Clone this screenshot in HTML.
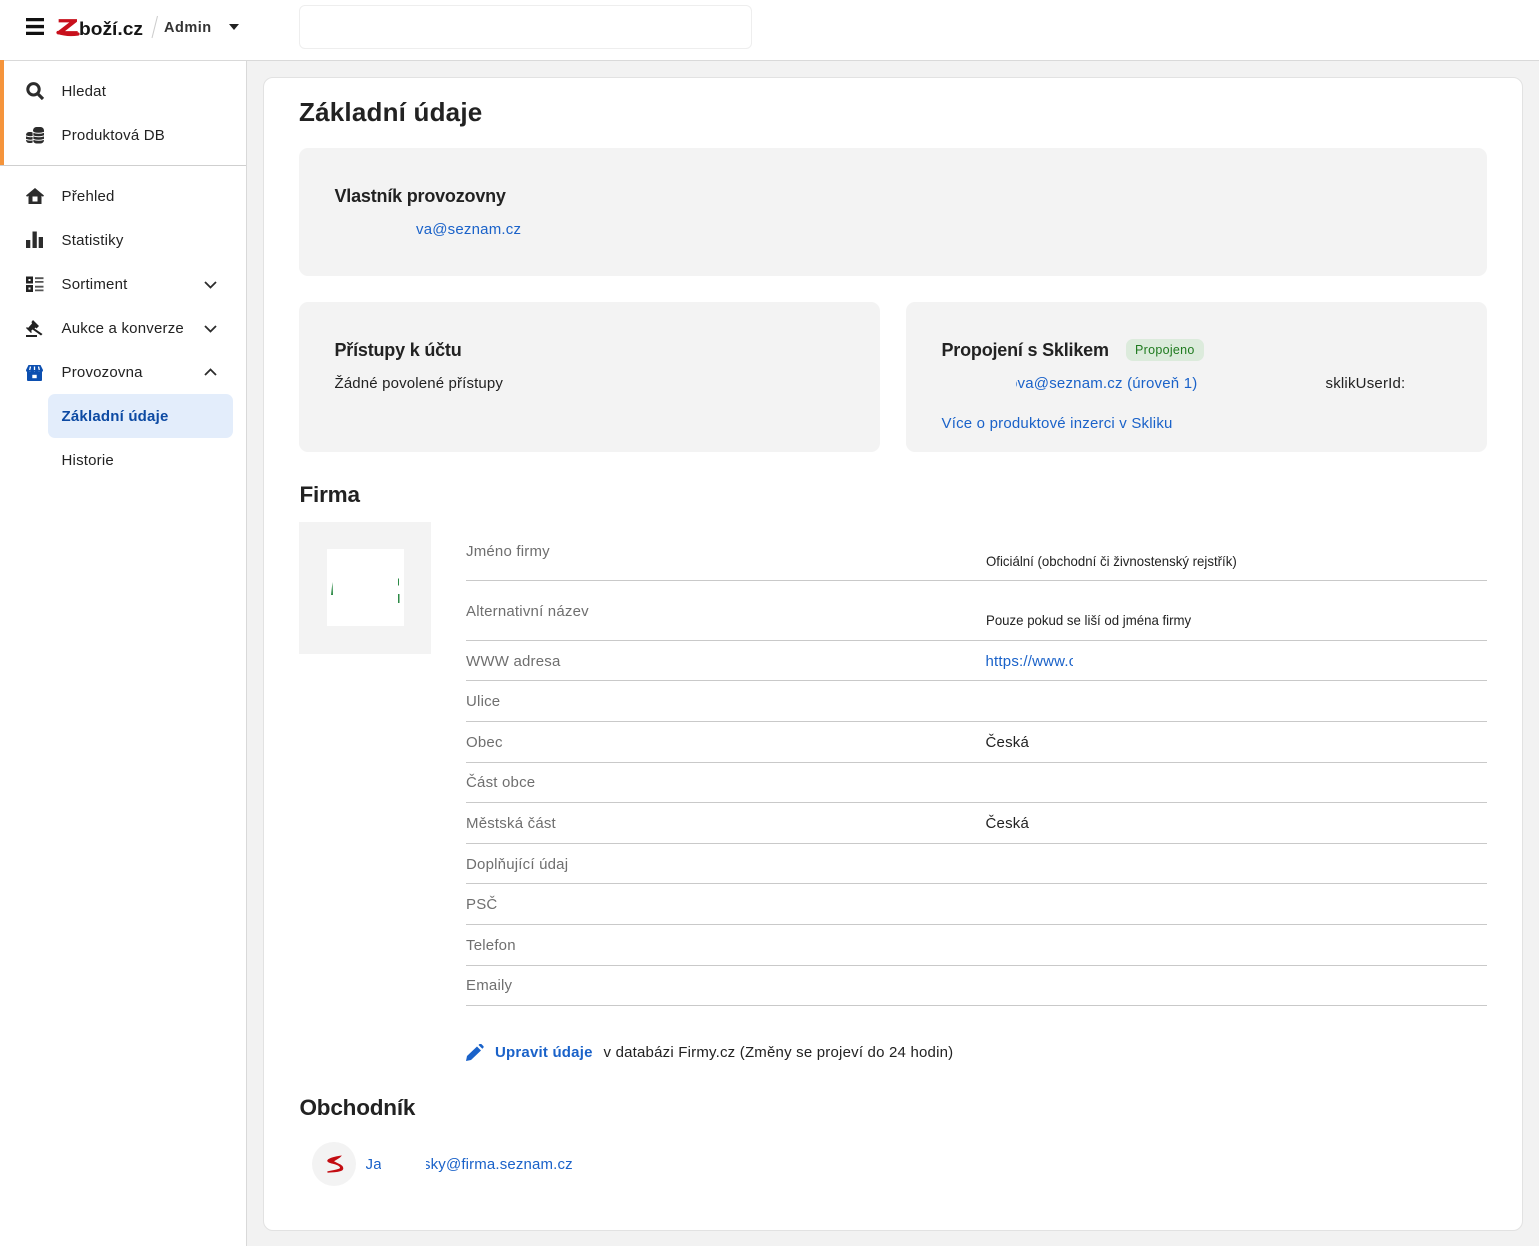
<!DOCTYPE html>
<html lang="cs"><head><meta charset="utf-8"><title>Základní údaje</title>
<style>
html,body{margin:0;padding:0}
body{width:1539px;height:1246px;position:relative;overflow:hidden;background:#f2f2f2;font-family:"Liberation Sans",sans-serif;color:#222;font-size:15px}
.a,.t{position:absolute}
.t{white-space:nowrap;line-height:20px;letter-spacing:.2px;margin-top:1px}
.g{color:#6f6f6f}.b{color:#1a62c9}.h2{font-size:22.500px;font-weight:700;line-height:28px;letter-spacing:-.2px;margin-top:0}
.h3{font-size:18px;font-weight:700;line-height:24px;letter-spacing:-.2px;margin-top:0}
.card{position:absolute;background:#f3f3f3;border-radius:9px}
.ln{position:absolute;left:466px;width:1021px;height:1px;background:#c9c9c9}
svg{position:absolute;display:block}
</style></head><body>
<div class="a" style="left:0;top:0;width:1539px;height:60px;background:#fff;border-bottom:1px solid #d9d9d9"></div>
<div class="a" style="left:0;top:61px;width:246px;height:1185px;background:#fff;border-right:1px solid #d9d9d9"></div>
<div class="a" style="left:0;top:60px;width:4px;height:105px;background:#f5943b"></div>
<div class="a" style="left:0;top:165px;width:246px;height:1px;background:#cfcfcf"></div>

<svg style="left:26px;top:18px" width="18" height="17" viewBox="0 0 18 17"><path d="M0 0h18v3.300H0zM0 6.900h18v3.300H0zM0 13.700h18v3.300H0z" fill="#111"/></svg>
<svg style="left:54px;top:14px" width="94" height="26" viewBox="0 0 94 26"><text x="3" y="20" font-family="Liberation Sans" font-size="21" font-weight="700" fill="#c8101c" stroke="#c8101c" stroke-width=".8" textLength="21" lengthAdjust="spacingAndGlyphs">Z</text><path d="M4 18.500q9 3 20 1.500" fill="none" stroke="#c8101c" stroke-width="3.200" stroke-linecap="round"/><text x="25" y="21" font-family="Liberation Sans" font-size="18" font-weight="700" fill="#151515" textLength="64" lengthAdjust="spacingAndGlyphs">boží.cz</text></svg>
<svg style="left:150px;top:15px" width="10" height="24" viewBox="0 0 10 24"><path d="M7.500 1L2 23" stroke="#ccc" stroke-width="1"/></svg>
<span class="t" style="left:164px;top:17px;font-weight:700;font-size:14.500px;letter-spacing:.5px;color:#333">Admin</span>
<svg style="left:229px;top:24px" width="10" height="6" viewBox="0 0 10 6"><path d="M0 0h10L5 6z" fill="#222"/></svg>
<div class="a" style="left:299px;top:5px;width:451px;height:42px;background:#fff;border:1px solid #eee;border-radius:6px"></div>

<svg style="left:26px;top:82px" width="18" height="18" viewBox="0 0 18 18"><circle cx="7.500" cy="7.300" r="5.700" fill="none" stroke="#2c2c2c" stroke-width="3"/><path d="M11.500 11.500L17 17" stroke="#2c2c2c" stroke-width="3.200"/></svg>
<span class="t" style="left:61.500px;top:81px">Hledat</span>
<svg style="left:26px;top:127px" width="18" height="17" viewBox="0 0 18 17"><rect x="7" y="0" width="11" height="16.500" rx="3.500" fill="#2c2c2c"/><rect x="0" y="5" width="8" height="11" rx="3" fill="#2c2c2c"/><path d="M7 5.300q5.500 2 11 0M7 8.800q5.500 2 11 0M7 12.300q5.500 2 11 0M0 8.800q3.500 1.500 7 .5M0 12.300q3.500 1.500 7 .5" fill="none" stroke="#fff" stroke-width="1"/><path d="M7 4v12.500" stroke="#fff" stroke-width=".8"/></svg>
<span class="t" style="left:61.500px;top:125px">Produktová DB</span>

<svg style="left:26px;top:188px" width="18" height="16" viewBox="0 0 18 16"><path d="M9 0l9 7.500-1 1.300-1.500-1V16h-13V7.800L1 8.800 0 7.500z" fill="#2c2c2c"/><path d="M6.500 8.500h5v5h-5z" fill="#fff"/></svg>
<span class="t" style="left:61.500px;top:186px">Přehled</span>
<svg style="left:26px;top:231px" width="18" height="17" viewBox="0 0 18 17" fill="#2c2c2c"><path d="M0 9h4.300v8H0zM6.500 0.500h4.300V17H6.500zM12.700 6h4.300v11h-4.300z"/></svg>
<span class="t" style="left:61.500px;top:230px">Statistiky</span>
<svg style="left:26px;top:276px" width="18" height="17" viewBox="0 0 18 17" fill="#222"><path d="M0 .500h7v7H0zM0 9h7v7H0z"/><path d="M2.500 3h2v2h-2zM2.500 11.500h2v2h-2z" fill="#fff"/><path d="M9 1.300h8.500v1.800H9zM9 5h8.500v1.800H9zM9 9.800h8.500v1.800H9zM9 13.500h8.500v1.800H9z" fill="#555"/></svg>
<span class="t" style="left:61.500px;top:274px">Sortiment</span>
<svg style="left:204px;top:281px" width="13" height="8" viewBox="0 0 13 8"><path d="M1 1l5.500 5.500L12 1" fill="none" stroke="#2c2c2c" stroke-width="1.800"/></svg>
<svg style="left:26px;top:320px" width="17" height="17" viewBox="0 0 17 17" fill="#222"><path d="M7 0l6 6-2.500 2.500-1-1L8.500 8.500l8 5.500-1.500 1.500L6.500 9.500 5 11l1 1-1 1-5-5 1-1 1 1L6 3.500 5.500 2z"/><path d="M0 15h11v2H0z"/></svg>
<span class="t" style="left:61.500px;top:318px">Aukce a konverze</span>
<svg style="left:204px;top:325px" width="13" height="8" viewBox="0 0 13 8"><path d="M1 1l5.500 5.500L12 1" fill="none" stroke="#2c2c2c" stroke-width="1.800"/></svg>
<svg style="left:26px;top:365px" width="17" height="16" viewBox="0 0 17 16"><path d="M2.500 0h12L17 5c0 2.500-3 3-4 1.500-1 1.600-3.500 1.600-4.500 0-1 1.600-3.500 1.600-4.500 0C3 8 0 7.500 0 5z" fill="#0c4fb0"/><path d="M1 7h15v8a1 1 0 0 1-1 1H2a1 1 0 0 1-1-1z" fill="#0c4fb0"/><path d="M6.300 9.800h4.400v3.400H6.300z" fill="#fff"/><path d="M4.500 1.500L3.700 5M8.500 1.500V5M12.500 1.500l.8 3.500" stroke="#fff" stroke-width="1.300"/></svg>
<span class="t" style="left:61.500px;top:362px">Provozovna</span>
<svg style="left:204px;top:368px" width="13" height="8" viewBox="0 0 13 8"><path d="M1 7l5.500-5.500L12 7" fill="none" stroke="#2c2c2c" stroke-width="1.800"/></svg>
<div class="a" style="left:48px;top:394px;width:185px;height:44px;background:#e3edfb;border-radius:7px"></div>
<span class="t" style="left:61.500px;top:406px;font-weight:700;color:#0d4aa3">Základní údaje</span>
<span class="t" style="left:61.500px;top:450px">Historie</span>

<div class="a" style="left:263px;top:77px;width:1258px;height:1152px;background:#fff;border:1px solid #e2e2e2;border-radius:10px"></div>
<span class="t" style="left:299px;top:95px;font-size:26px;font-weight:700;line-height:32px;letter-spacing:.2px">Základní údaje</span>
<div class="card" style="left:299px;top:148px;width:1188px;height:128px"></div>
<span class="t h3" style="left:334.500px;top:184px">Vlastník provozovny</span>
<span class="t b" style="left:416px;top:219px">va@seznam.cz</span>
<div class="card" style="left:299px;top:302px;width:581px;height:150px"></div>
<span class="t h3" style="left:334.500px;top:338px">Přístupy k účtu</span>
<span class="t" style="left:334.500px;top:373px;letter-spacing:.15px">Žádné povolené přístupy</span>
<div class="card" style="left:906px;top:302px;width:581px;height:150px"></div>
<span class="t h3" style="left:941.500px;top:338px">Propojení s Sklikem</span>
<div class="a" style="left:1126px;top:339px;width:78px;height:22px;border-radius:7px;background:#dcebdc"></div>
<span class="t" style="left:1135px;top:339px;font-size:12.500px;letter-spacing:.3px;color:#1f7a1f">Propojeno</span>
<span class="t b" style="left:1016px;top:373px;width:184px;overflow:hidden"><span style="margin-left:-7px">ova@seznam.cz (úroveň 1)</span></span>
<span class="t" style="left:1325.500px;top:373px">sklikUserId:</span>
<span class="t b" style="left:941.500px;top:413px">Více o produktové inzerci v Skliku</span>

<span class="t h2" style="left:299.500px;top:481px">Firma</span>
<div class="a" style="left:299px;top:522px;width:132px;height:132px;background:#f3f3f3"></div>
<div class="a" style="left:327px;top:549px;width:77px;height:77px;background:#fff"></div>
<svg style="left:330px;top:576px" width="72" height="30" viewBox="0 0 72 30" fill="#2c8a46"><path d="M1 19L2.500 6 3 19zM68 2.500h1v7h-1zM68 18h1.500v9H68z"/></svg>

<span class="t g" style="left:466px;top:541px">Jméno firmy</span>
<span class="t" style="left:986px;top:550px;font-size:14px;letter-spacing:0;transform:scaleX(.945);transform-origin:0 0">Oficiální (obchodní či živnostenský rejstřík)</span>
<div class="ln" style="top:580px"></div>
<span class="t g" style="left:466px;top:601px">Alternativní název</span>
<span class="t" style="left:986px;top:609px;font-size:14px;letter-spacing:0;transform:scaleX(.945);transform-origin:0 0">Pouze pokud se liší od jména firmy</span>
<div class="ln" style="top:640px"></div>
<span class="t g" style="left:466px;top:651px">WWW adresa</span>
<span class="t b" style="left:985.500px;top:651px;width:87px;overflow:hidden">https://www.ceska</span>
<div class="ln" style="top:680px"></div>
<span class="t g" style="left:466px;top:691px">Ulice</span>
<div class="ln" style="top:721px"></div>
<span class="t g" style="left:466px;top:732px">Obec</span>
<span class="t" style="left:985.500px;top:732px">Česká</span>
<div class="ln" style="top:762px"></div>
<span class="t g" style="left:466px;top:772px">Část obce</span>
<div class="ln" style="top:802px"></div>
<span class="t g" style="left:466px;top:813px">Městská část</span>
<span class="t" style="left:985.500px;top:813px">Česká</span>
<div class="ln" style="top:843px"></div>
<span class="t g" style="left:466px;top:854px">Doplňující údaj</span>
<div class="ln" style="top:883px"></div>
<span class="t g" style="left:466px;top:894px">PSČ</span>
<div class="ln" style="top:924px"></div>
<span class="t g" style="left:466px;top:935px">Telefon</span>
<div class="ln" style="top:965px"></div>
<span class="t g" style="left:466px;top:975px">Emaily</span>
<div class="ln" style="top:1005px"></div>

<svg style="left:466px;top:1044px" width="18" height="17" viewBox="0 0 18 17" fill="#1a62c9"><path d="M0 17l1-5L11 2.500l4 4L5 16zM12.500 1l1-1c.6-.4 1.300-.4 1.800 0l2 2c.5.500.5 1.200 0 1.800l-1 1z"/></svg>
<span class="t" style="left:495px;top:1042px;font-weight:700;color:#1a62c9">Upravit údaje</span>
<span class="t" style="left:603.500px;top:1042px">v databázi Firmy.cz (Změny se projeví do 24 hodin)</span>

<span class="t h2" style="left:299.500px;top:1094px">Obchodník</span>
<div class="a" style="left:312px;top:1142px;width:44px;height:44px;border-radius:50%;background:#f3f3f3"></div>
<svg style="left:326px;top:1155px" width="18" height="18" viewBox="0 0 18 18"><path d="M14 1.500C10 2 3.500 3.500 2 5.500 1.500 7.500 9 8 12.500 10c2.500 1.500 3 3.300 1 4.300-3 1.300-8 1.800-12 2.700 4-.3 11-.3 14-2 2-1.300 1-3.500-1.500-5C11 8.500 8.500 7.700 7 6.300 8 5 12 3.500 14 1.500z" fill="#c30d12" stroke="#c30d12" stroke-width="1.400"/></svg>
<span class="t b" style="left:365.500px;top:1154px;width:15px;overflow:hidden">Ja</span>
<span class="t b" style="left:426px;top:1154px;width:150px;overflow:hidden;letter-spacing:.15px"><span style="margin-left:-3px">sky@firma.seznam.cz</span></span>
</body></html>
